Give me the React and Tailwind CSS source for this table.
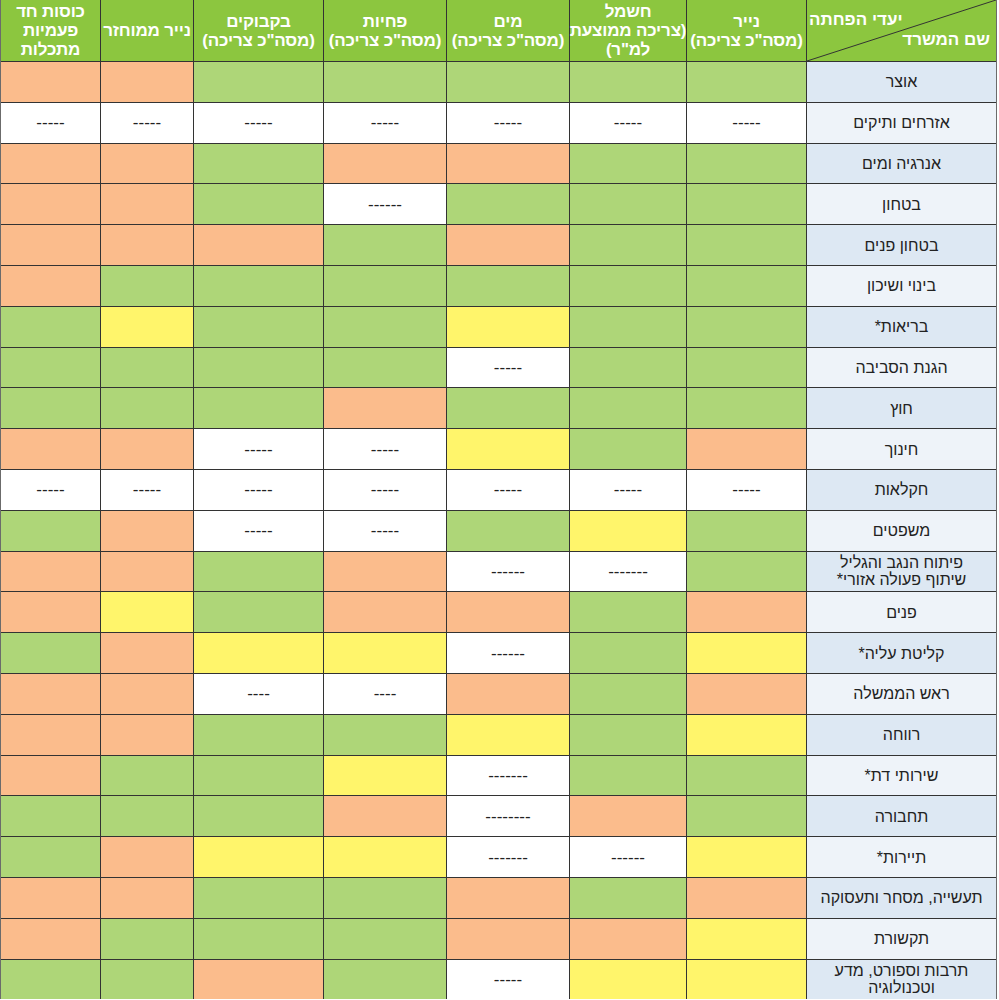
import React from 'react';

const headers = [
  ['נייר', '(מסה"כ צריכה)'],
  ['חשמל', '(צריכה ממוצעת', 'למ"ר)'],
  ['מים', '(מסה"כ צריכה)'],
  ['פחיות', '(מסה"כ צריכה)'],
  ['בקבוקים', '(מסה"כ צריכה)'],
  ['נייר ממוחזר'],
  ['כוסות חד', 'פעמיות', 'מתכלות'],
];

// g = green, o = orange, y = yellow, anything else = white cell with dashes
const rows = [
  { name: ['אוצר'], cells: ['g', 'g', 'g', 'g', 'g', 'o', 'o'] },
  { name: ['אזרחים ותיקים'], cells: ['-----', '-----', '-----', '-----', '-----', '-----', '-----'] },
  { name: ['אנרגיה ומים'], cells: ['g', 'g', 'o', 'o', 'g', 'o', 'o'] },
  { name: ['בטחון'], cells: ['g', 'g', 'g', '------', 'g', 'o', 'o'] },
  { name: ['בטחון פנים'], cells: ['g', 'g', 'o', 'g', 'o', 'o', 'o'] },
  { name: ['בינוי ושיכון'], cells: ['g', 'g', 'g', 'g', 'g', 'g', 'o'] },
  { name: ['בריאות*'], cells: ['g', 'g', 'y', 'g', 'g', 'y', 'g'] },
  { name: ['הגנת הסביבה'], cells: ['g', 'g', '-----', 'g', 'g', 'g', 'g'] },
  { name: ['חוץ'], cells: ['g', 'g', 'g', 'o', 'g', 'g', 'g'] },
  { name: ['חינוך'], cells: ['o', 'g', 'y', '-----', '-----', 'o', 'o'] },
  { name: ['חקלאות'], cells: ['-----', '-----', '-----', '-----', '-----', '-----', '-----'] },
  { name: ['משפטים'], cells: ['g', 'y', 'g', '-----', '-----', 'o', 'g'] },
  { name: ['פיתוח הנגב והגליל', 'שיתוף פעולה אזורי*'], cells: ['g', '-------', '------', 'o', 'g', 'o', 'o'] },
  { name: ['פנים'], cells: ['o', 'g', 'o', 'o', 'g', 'y', 'o'] },
  { name: ['קליטת עליה*'], cells: ['y', 'g', '------', 'y', 'y', 'o', 'g'] },
  { name: ['ראש הממשלה'], cells: ['o', 'g', 'o', '----', '----', 'o', 'o'] },
  { name: ['רווחה'], cells: ['y', 'g', 'y', 'g', 'g', 'o', 'o'] },
  { name: ['שירותי דת*'], cells: ['g', 'g', '-------', 'y', 'g', 'g', 'o'] },
  { name: ['תחבורה'], cells: ['g', 'o', '--------', 'o', 'g', 'g', 'g'] },
  { name: ['תיירות*'], cells: ['y', '------', '-------', 'y', 'y', 'o', 'g'] },
  { name: ['תעשייה, מסחר ותעסוקה'], cells: ['o', 'g', 'o', 'g', 'g', 'o', 'o'] },
  { name: ['תקשורת'], cells: ['y', 'o', 'o', 'g', 'g', 'g', 'o'] },
  { name: ['תרבות וספורט, מדע', 'וטכנולוגיה'], cells: ['y', 'y', '-----', 'g', 'o', 'g', 'g'] },
];

const cellBg = {
  g: 'bg-[#aed678]',
  o: 'bg-[#fbbc8c]',
  y: 'bg-[#fff56b]',
};

const Cell = ({ value }) => {
  const bg = cellBg[value];
  if (bg) return <div className={bg} />;
  return (
    <div className="bg-white flex items-center justify-center text-[17px] leading-none text-[#222]">
      {value}
    </div>
  );
};

const App = () => {
  return (
    <div className="w-[999px] h-[1000px] bg-white overflow-hidden font-['Liberation_Sans',sans-serif]">
      <div
        dir="rtl"
        className="w-[997px] grid grid-cols-[189px_119px_116px_122px_122px_129px_92px_99px] grid-rows-[61px_repeat(23,39.8px)] gap-px bg-[#333] border-x border-x-[#6b6b6b]"
      >
        {/* header */}
        <div className="relative bg-[#8cc63f] text-white font-bold text-[17px] leading-[20px] flex flex-col justify-center">
          <svg className="absolute inset-0 w-full h-full" viewBox="0 0 100 100" preserveAspectRatio="none">
            <line x1="0" y1="100" x2="100" y2="0" stroke="#333" strokeWidth="1" vectorEffect="non-scaling-stroke" />
          </svg>
          <div className="text-left pl-[2px] -mt-[2px]">יעדי הפחתה</div>
          <div className="text-right pr-[6px]">שם המשרד</div>
        </div>
        {headers.map((lines, i) => (
          <div
            key={i}
            className="bg-[#8cc63f] text-white font-bold text-[17px] leading-[19px] flex flex-col items-center justify-center text-center whitespace-nowrap tracking-[-0.2px]"
          >
            {lines.map((line) => (
              <span key={line}>{line}</span>
            ))}
          </div>
        ))}

        {/* body */}
        {rows.map((row, r) => (
          <React.Fragment key={r}>
            <div
              className={`${r % 2 === 0 ? 'bg-[#dde8f3]' : 'bg-[#eef3f9]'} flex flex-col items-center justify-center text-center text-[16px] leading-[17px] text-[#222]`}
            >
              {row.name.map((line) => (
                <span key={line}>{line}</span>
              ))}
            </div>
            {row.cells.map((c, i) => (
              <Cell key={i} value={c} />
            ))}
          </React.Fragment>
        ))}
      </div>
    </div>
  );
};

export default App;
